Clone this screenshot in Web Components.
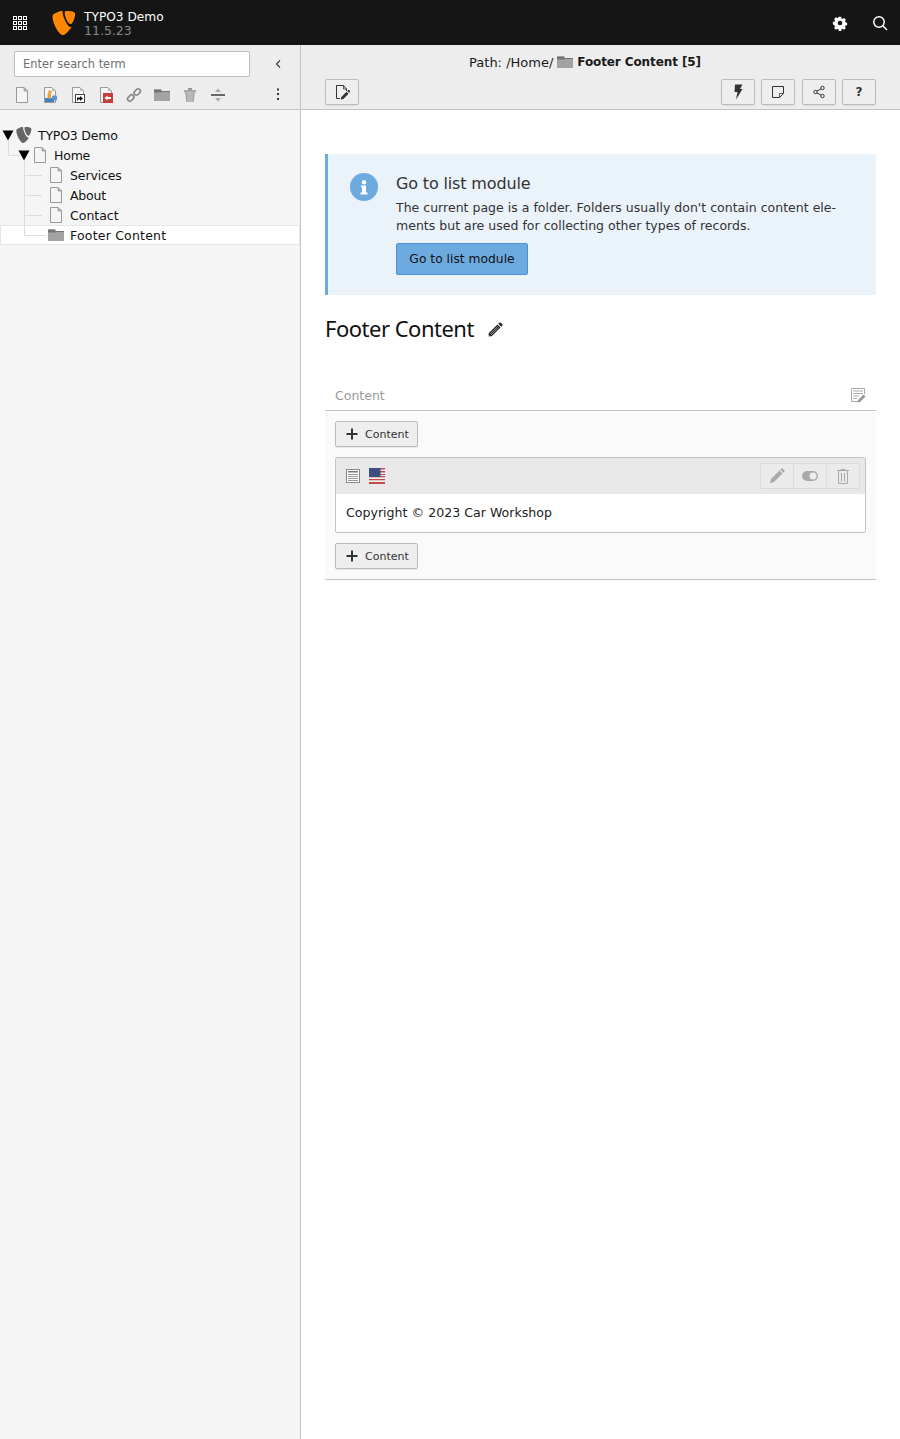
<!DOCTYPE html>
<html lang="en"><head><meta charset="utf-8"><title>TYPO3 Demo</title>
<style>
html,body{margin:0;padding:0;height:100%}
body{font-family:"DejaVu Sans",Verdana,sans-serif;font-size:12px;color:#1a1a1a;background:#fff}
t3-app{height:1439px}
</style></head><body>
<script>
const I={
page:'<svg viewBox="0 0 16 16" width="16" height="16"><path d="M2.500.500H10L13.500 4v11.500h-11z" fill="#f5f5f5" stroke="#999"/><path d="M10 .500V4h3.500z" fill="#bbb" stroke="#999" stroke-width=".8"/></svg>',
folder:'<svg viewBox="0 0 16 16" width="16" height="16"><path d="M0 2.500h6.500l1 1.500H16v10H0z" fill="#a3a3a3"/><path d="M0 2.500h7.500v3H0z" fill="#737373"/><path d="M7.500 4H16v1H7.500z" fill="#737373"/></svg>',
logo:'<svg viewBox="0 0 24 24" width="24" height="24"><path d="M18.600 15.900c-.4.1-.7.2-1.100.2-3.200 0-7.900-11.200-7.900-14.900 0-1.400.3-1.900.8-2.300C6.500.400 1.600 1.900 0 3.800-.3 4.300-.5 5-.5 5.900-.5 11.700 5.700 24 10 24c2 0 5.300-3.300 8.600-8.100z" fill="#ff8700" transform="translate(1 0)"/><path d="M15.700 0c4 0 8 .6 8 2.900 0 4.600-2.900 10.200-4.400 10.200-2.700 0-6-7.500-6-11.200C13.300.200 13.900 0 15.700 0z" fill="#ff8700" transform="translate(-.6 0)"/></svg>'
};
I.logoGrey=I.logo.replace(/#ff8700/g,'#666').replace('width="24" height="24"','width="16" height="16"');
const icons={
grid:'<svg viewBox="0 0 16 16" width="16" height="16" fill="none" stroke="#fff" stroke-width="1"><rect x="1.500" y="1.500" width="3" height="3"/><rect x="6.500" y="1.500" width="3" height="3"/><rect x="11.500" y="1.500" width="3" height="3"/><rect x="1.500" y="6.500" width="3" height="3"/><rect x="6.500" y="6.500" width="3" height="3"/><rect x="11.500" y="6.500" width="3" height="3"/><rect x="1.500" y="11.500" width="3" height="3"/><rect x="6.500" y="11.500" width="3" height="3"/><rect x="11.500" y="11.500" width="3" height="3"/></svg>',
gear:'<svg viewBox="-1 -1 18 18" width="16" height="16"><path fill="#fff" fill-rule="evenodd" d="M6.600 1h2.800l.4 1.900 1.100.5 1.700-1 2 2-1 1.700.5 1.100 1.900.4v2.800l-1.900.4-.5 1.100 1 1.700-2 2-1.700-1-1.100.5-.4 1.900H6.600l-.4-1.900-1.100-.5-1.700 1-2-2 1-1.700-.5-1.100L0 9.400V6.600l1.900-.4.500-1.100-1-1.700 2-2 1.700 1 1.100-.5zM8 5.400a2.600 2.600 0 1 0 0 5.200 2.600 2.600 0 0 0 0-5.200z"/></svg>',
search:'<svg viewBox="0 0 16 16" width="16" height="16" fill="none" stroke="#fff" stroke-width="1.500"><circle cx="7" cy="7" r="5.250"/><path d="M10.800 10.800l4.200 4.200"/></svg>',
back:'<svg viewBox="0 0 16 16" width="16" height="16" fill="none" stroke="#444" stroke-width="1.300"><path d="M10 4.500L6.500 8l3.500 3.500"/></svg>',
newPage:I.page,
pageUsers:'<svg viewBox="0 0 16 16" width="16" height="16"><path d="M2.500.500H10L13.500 4v11.500h-11z" fill="#f5f5f5" stroke="#999"/><path d="M10 .500V4h3.500z" fill="#bbb"/><rect x="3" y="11" width="9" height="4" fill="#3f7fc4"/><rect x="10" y="8.500" width="5" height="5" rx="1" fill="#5b93cf"/><path d="M5.500 11.500V7.500c0-1 1-2 2-2s1.500 1 1.500 2v4z" fill="#e8a33a"/><circle cx="8" cy="5" r="1.800" fill="#e8a33a"/></svg>',
pageIn:'<svg viewBox="0 0 16 16" width="16" height="16"><path d="M2.500.500H10L13.500 4v11.500h-11z" fill="#f5f5f5" stroke="#999"/><path d="M10 .500V4h3.500z" fill="#bbb"/><rect x="5.500" y="7.500" width="9" height="8" fill="#fff" stroke="#444"/><path d="M7 10.500h3V9l3 2.500-3 2.500v-1.500H8v1H7z" fill="#111"/></svg>',
pageOut:'<svg viewBox="0 0 16 16" width="16" height="16"><path d="M2.500.500H10L13.500 4v11.500h-11z" fill="#f5f5f5" stroke="#999"/><path d="M10 .500V4h3.500z" fill="#bbb"/><rect x="5" y="6" width="10" height="10" fill="#c83c3c"/><path d="M13 10H9.500V8.500L6.500 11l3 2.500V12H13z" fill="#fff"/></svg>',
link:'<svg viewBox="0 0 16 16" width="16" height="16" fill="none" stroke="#888" stroke-width="1.700"><rect x="9" y="1.500" width="4.500" height="7" rx="2.200" transform="rotate(45 11.250 5)"/><rect x="2.500" y="7.500" width="4.500" height="7" rx="2.200" transform="rotate(45 4.750 11)"/></svg>',
trash:'<svg viewBox="0 0 16 16" width="16" height="16"><path d="M6 1h4v2H6z" fill="#999"/><path d="M2 3h12v2.500H2z" fill="#a8a8a8"/><path d="M3.500 5.500h9l-.8 9.500H4.300z" fill="#b8b8b8"/><path d="M3.500 5.500h1.500l.4 9.500H4.300zM11 5.500h1.500l-.8 9.500h-1.100z" fill="#a3a3a3"/></svg>',
divider:'<svg viewBox="0 0 16 16" width="16" height="16"><path d="M1 7h14v2H1z" fill="#666"/><path d="M8 1.500L5 5h6zM8 14.500L5 11h6z" fill="#aaa"/></svg>',
dots:'<svg viewBox="0 0 16 16" width="16" height="16" fill="#333"><rect x="7" y="2.500" width="2" height="2"/><rect x="7" y="7" width="2" height="2"/><rect x="7" y="12" width="2" height="2"/></svg>',
editPage:'<svg viewBox="0 0 16 16" width="16" height="16"><path d="M6 14.500H2.500v-13h7L12.500 5v2" fill="none" stroke="#333"/><path d="M9.500 1.500V5h3" fill="none" stroke="#333" stroke-width=".8"/><path d="M6.800 15.500l.6-2.600 5.100-5.100 2 2-5.100 5.100z" fill="#333"/><path d="M13.300 7l.9-.9c.3-.3.700-.3 1 0l.8.8c.3.3.3.7 0 1l-.9.9z" fill="#333"/></svg>',
bolt:'<svg viewBox="0 0 16 16" width="16" height="16"><path d="M5 .500h7.500l-2.500 4.500h2.500L6 15.500l1.500-7.500H4.500z" fill="#333"/></svg>',
note:'<svg viewBox="0 0 16 16" width="16" height="16" fill="none" stroke="#333"><path d="M2.500 2.500h11v7l-4 4h-7z"/><path d="M13.500 9.500h-4v4" stroke-width=".8"/></svg>',
share:'<svg viewBox="0 0 16 16" width="16" height="16" fill="none" stroke="#333" stroke-width="1"><circle cx="11.500" cy="4" r="1.700"/><circle cx="11.500" cy="12" r="1.700"/><circle cx="4.500" cy="8" r="1.700"/><path d="M10 4.900L6 7.100M10 11.100L6 8.900"/></svg>',
plus:'<svg viewBox="0 0 16 16" width="16" height="16"><path d="M7 2.500h2V7h4.500v2H9v4.500H7V9H2.500V7H7z" fill="#333"/></svg>',
pencil:'<svg viewBox="0 0 16 16" width="16" height="16"><path d="M1 15l.9-3.900L10.500 2.500l3 3L4.900 14.100z" fill="#222"/><path d="M11.300 1.700l1-1c.4-.4 1-.4 1.400 0l1.600 1.600c.4.4.4 1 0 1.400l-1 1z" fill="#222"/><path d="M3 12l7.500-7.500M4 13l7.500-7.500" stroke="#fff" stroke-width=".5"/><path d="M1 15l.5-2.200 1.700 1.700z" fill="#fff"/></svg>',
info:'<svg viewBox="0 0 28 28" width="28" height="28"><circle cx="14" cy="14" r="14" fill="#6daae0"/><circle cx="14" cy="9.300" r="2.200" fill="#fff"/><path d="M11 12.500h5v7h1.500v2h-7v-2H12v-5h-1z" fill="#fff"/></svg>',
colEdit:'<svg viewBox="0 0 16 16" width="16" height="16"><path d="M8 14.500H1.500v-13h13V7" fill="#fff" stroke="#aaa"/><path d="M3 4h10M3 6.500h10M3 9h6M3 11.500h4" stroke="#aaa" fill="none"/><path d="M7.500 15.500l.6-2.500 5.400-5.400 2 2-5.400 5.400z" fill="#999"/></svg>',
text:'<svg viewBox="0 0 16 16" width="16" height="16"><rect x="1.500" y="1.500" width="13" height="13" fill="#fff" stroke="#888"/><path d="M3 3h10v1.500H3z" fill="#777"/><path d="M3 6.500h10M3 8.500h10M3 10.500h10M3 12.500h10" stroke="#999"/></svg>',
flag:'<svg viewBox="0 0 16 16" width="16" height="16"><rect width="16" height="16" fill="#eee"/><path d="M0 8h16v1.300H0zM0 11h16v1.300H0zM0 14h16v2H0zM8 0h8v1.500H8zM8 3h8v1.500H8zM8 6h8v1H8z" fill="#c24a4f"/><rect width="11.500" height="9" fill="#3d4f7f"/></svg>',
pencilG:'<svg viewBox="0 0 16 16" width="16" height="16"><path d="M1 15l.9-3.900L10.500 2.500l3 3L4.900 14.100z" fill="#aaa"/><path d="M11.300 1.700l1-1c.4-.4 1-.4 1.400 0l1.600 1.600c.4.4.4 1 0 1.400l-1 1z" fill="#aaa"/></svg>',
toggle:'<svg viewBox="0 0 16 16" width="16" height="16"><rect y="3" width="16" height="10" rx="5" fill="#aaa"/><circle cx="11" cy="8" r="3.500" fill="#eee"/></svg>',
trashG:'<svg viewBox="0 0 16 16" width="16" height="16" fill="none" stroke="#aaa"><path d="M6 2.500v-1h4v1M2 2.500h12M3.500 3v12.500h9V3M6.500 5v8.500M9.500 5v8.500"/></svg>',
caret:'<svg viewBox="0 0 12 12" width="12" height="12"><path d="M.500 1.500h11L6 11.500z" fill="#000"/></svg>',
...I
};
function el(tag,css,html){
  customElements.define(tag,class extends HTMLElement{
    connectedCallback(){
      if(this.shadowRoot)return;
      const s=this.attachShadow({mode:'open'});
      const n=this.getAttribute('icon');
      s.innerHTML='<style>'+css+'</style>'+html.replace('%I',n?(icons[n]||''):'');
    }
  });
}
el('t3-icon',':host{display:inline-flex;width:16px;height:16px;flex:none}svg{display:block}','%I');
el('t3-app',':host{display:flex;flex-direction:column;height:1439px}.b{flex:1;display:flex;min-height:0}','<slot name="top"></slot><div class="b"><slot></slot></div>');
el('t3-topbar',`:host{display:flex;align-items:center;height:45px;flex:none;background:#151515;color:#fff}
.g{width:16px;margin-left:12px;display:flex;align-self:flex-start;margin-top:15px}.l{margin-left:24px;width:24px;height:24px;display:flex}
.t{margin-left:8px;line-height:14px;font-size:12.200px;display:flex;flex-direction:column;padding-top:2px}.v{color:#888;font-size:12.500px}
.r{margin-left:auto;display:flex;gap:24px;padding-right:12px}`,
`<span class="g">${icons.grid}</span><span class="l">${icons.logo}</span><div class="t"><span>TYPO3 Demo</span><span class="v">11.5.23</span></div><div class="r">${icons.gear}${icons.search}</div>`);
el('t3-sidebar',`:host{display:flex;flex-direction:column;width:300px;flex:none;background:#f5f5f5;border-right:1px solid #c3c3c3}
.h{height:64px;background:#ededed;border-bottom:1px solid #c3c3c3;display:flex;flex-direction:column;padding:0 14px;box-sizing:content-box}
.s{display:flex;align-items:center;margin-top:6px;height:26px}
input{width:236px;height:26px;box-sizing:border-box;border:1px solid #bbb;border-radius:2px;background:#fff;padding:0 8px;font:11.400px "DejaVu Sans",sans-serif;outline:0}
input::placeholder{color:#6e6e6e;opacity:1}
.b{margin-left:20px;display:flex}
.i{display:flex;align-items:center;margin-top:10px;height:16px;gap:12px}
.m{margin-left:auto}
.t{padding-top:15px}`,
`<div class="h"><div class="s"><input placeholder="Enter search term" aria-label="Search"><span class="b">${icons.back}</span></div>
<div class="i"><slot name="tools"></slot><span class="m">${icons.dots}</span></div></div><div class="t"><slot></slot></div>`);
el('t3-tree',`:host{display:block;position:relative}svg{position:absolute;left:0;top:0;pointer-events:none}`,
`<slot></slot><svg width="60" height="120" fill="none" stroke="#dcdcdc"><path d="M8.500 16v14.500H20M24.500 36v74.500H46M24.500 50.500H42M24.500 70.500H42M24.500 90.500H42"/></svg>`);
el('t3-row',`:host{display:flex;align-items:center;height:20px;font-size:12.500px;letter-spacing:var(--ls,-.15px);color:#111;box-sizing:border-box;padding-left:var(--in,32px)}
:host([selected]){background:#fff;box-shadow:inset 0 0 0 1px #e6e6e6}
.c{display:flex;flex:none}.n{margin-left:6px}
::slotted(t3-icon[slot=c]){width:12px;height:12px;margin-right:2px}`,
`<span class="c"><slot name="c"></slot></span><slot name="i"></slot><span class="n"><slot></slot></span>`);
el('t3-docheader',`:host{display:block;height:64px;flex:none;background:#ededed;border-bottom:1px solid #c3c3c3}
.p{height:34px;display:flex;align-items:center;justify-content:center;font-size:13px;gap:4px;padding-right:31px}
.b{display:flex;justify-content:space-between;padding:0 24px}
.g{display:flex;gap:6.330px}
::slotted(b){font-size:12px;letter-spacing:-.1px}`,
`<div class="p"><slot name="path"></slot></div><div class="b"><div class="g"><slot name="left"></slot></div><div class="g"><slot name="right"></slot></div></div>`);
el('t3-btn',`:host{display:inline-flex;align-items:center;justify-content:center;box-sizing:border-box;width:34px;height:26px;background:#eee;border:1px solid #bbb;border-radius:2px;box-shadow:0 1px 1px rgba(0,0,0,.08);color:#333;font-size:12px;font-weight:700}`,`<slot></slot>`);
el('t3-main',`:host{display:flex;flex-direction:column;flex:1;min-width:0}.c{padding:44px 24px 0}`,`<slot name="head"></slot><div class="c"><slot></slot></div>`);
el('t3-info',`:host{display:flex;box-sizing:border-box;height:141px;background:#eaf2fa;border-left:3px solid #6daae0;padding:19px 24px 0 22px;gap:18px}
.t{font-size:16px;color:#333;line-height:20px;padding-top:1px;letter-spacing:-.15px}.x{font-size:12.500px;letter-spacing:.015px;line-height:18px;color:#333;margin-top:5px;width:448px}
.a{display:inline-flex;margin-top:8px;align-items:center;justify-content:center;width:132px;height:32px;box-sizing:border-box;background:#6daae0;border:1px solid #4b93d6;border-radius:2px;color:#111;font-size:12.300px}
svg{display:block}.i{flex:none}`,
`<span class="i">${icons.info}</span><div><div class="t"><slot name="title"></slot></div><div class="x"><slot></slot></div><span class="a"><slot name="action"></slot></span></div>`);
el('t3-title',`:host{display:flex;align-items:center;height:66px;font-family:"Noto Sans",sans-serif;font-size:22px;letter-spacing:-.5px;color:#111;gap:14px}svg{display:block;margin-top:3px;margin-left:-1px}`,`<slot></slot>${icons.pencil}`);
el('t3-col',`:host{display:block;margin-top:19px;border-bottom:1px solid #c3c3c3}
.h{height:30px;box-sizing:content-box;border-bottom:1px solid #c3c3c3;display:flex;align-items:center;justify-content:space-between;padding:0 10px;color:#999;font-size:12.500px}
.b{background:#fafafa;padding:10px;display:flex;flex-direction:column;gap:10px;align-items:flex-start}svg{display:block}`,
`<div class="h"><span><slot name="name"></slot></span>${icons.colEdit}</div><div class="b"><slot></slot></div>`);
el('t3-add',`:host{display:inline-flex;align-items:center;box-sizing:border-box;width:83px;height:26px;padding-left:8px;gap:5px;background:#eee;border:1px solid #bbb;border-radius:2px;box-shadow:0 1px 1px rgba(0,0,0,.08);font-size:11px;color:#333}svg{display:block}`,`${icons.plus}<slot></slot>`);
el('t3-ce',`:host{display:block;align-self:stretch;box-sizing:border-box;height:76px;background:#fff;border:1px solid #c3c3c3;border-radius:2px}
.h{height:36px;background:#e8e8e8;display:flex;align-items:center;padding:0 5px 0 9px;gap:8px}svg{display:block}
.a{margin-left:auto;display:flex;width:100px;border:1px solid #dcdcdc;border-radius:2px;height:26px;box-sizing:border-box;background:#ebebeb}
.a span{flex:1;display:flex;align-items:center;justify-content:center;border-left:1px solid #dcdcdc}.a span:first-child{border-left:0}
.b{height:36px;display:flex;align-items:center;padding:0 10px;font-size:12.600px;color:#222}`,
`<div class="h">${icons.text}${icons.flag}<div class="a"><span>${icons.pencilG}</span><span>${icons.toggle}</span><span>${icons.trashG}</span></div></div><div class="b"><slot></slot></div>`);
</script>
<t3-app>
<t3-topbar slot="top"></t3-topbar>
<t3-sidebar>
<t3-icon slot="tools" icon="newPage"></t3-icon><t3-icon slot="tools" icon="pageUsers"></t3-icon><t3-icon slot="tools" icon="pageIn"></t3-icon><t3-icon slot="tools" icon="pageOut"></t3-icon><t3-icon slot="tools" icon="link"></t3-icon><t3-icon slot="tools" icon="folder"></t3-icon><t3-icon slot="tools" icon="trash"></t3-icon><t3-icon slot="tools" icon="divider"></t3-icon>
<t3-tree>
<t3-row style="--in:2px;--ls:-.2px"><t3-icon slot="c" icon="caret"></t3-icon><t3-icon slot="i" icon="logoGrey"></t3-icon>TYPO3 Demo</t3-row>
<t3-row style="--in:18px;--ls:-.2px"><t3-icon slot="c" icon="caret"></t3-icon><t3-icon slot="i" icon="page"></t3-icon>Home</t3-row>
<t3-row style="--in:48px;--ls:-.12px"><t3-icon slot="i" icon="page"></t3-icon>Services</t3-row>
<t3-row style="--in:48px;--ls:-.2px"><t3-icon slot="i" icon="page"></t3-icon>About</t3-row>
<t3-row style="--in:48px;--ls:0px"><t3-icon slot="i" icon="page"></t3-icon>Contact</t3-row>
<t3-row selected style="--in:48px;--ls:.2px"><t3-icon slot="i" icon="folder"></t3-icon>Footer Content</t3-row>
</t3-tree>
</t3-sidebar>
<t3-main>
<t3-docheader slot="head">
<span slot="path">Path: /Home/</span><t3-icon slot="path" icon="folder"></t3-icon><b slot="path">Footer Content [5]</b>
<t3-btn slot="left"><t3-icon icon="editPage"></t3-icon></t3-btn>
<t3-btn slot="right"><t3-icon icon="bolt"></t3-icon></t3-btn><t3-btn slot="right"><t3-icon icon="note"></t3-icon></t3-btn><t3-btn slot="right"><t3-icon icon="share"></t3-icon></t3-btn><t3-btn slot="right">?</t3-btn>
</t3-docheader>
<t3-info><span slot="title">Go to list module</span>The current page is a folder. Folders usually don't contain content ele&shy;ments but are used for collecting other types of records.<span slot="action">Go to list module</span></t3-info>
<t3-title>Footer Content</t3-title>
<t3-col><span slot="name">Content</span>
<t3-add>Content</t3-add>
<t3-ce>Copyright © 2023 Car Workshop</t3-ce>
<t3-add>Content</t3-add>
</t3-col>
</t3-main>
</t3-app>
</body></html>
